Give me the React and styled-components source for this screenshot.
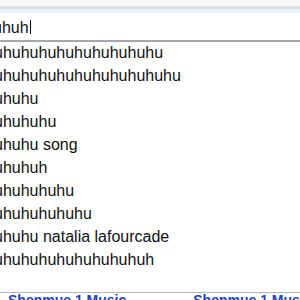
import React from 'react';
import styled, { createGlobalStyle } from 'styled-components';

const suggestions = [
  'uhuhuhuhuhuhuhuhuhu',
  'uhuhuhuhuhuhuhuhuhuhu',
  'uhuhu',
  'uhuhuhu',
  'uhuhu song',
  'uhuhuh',
  'uhuhuhuhu',
  'uhuhuhuhuhu',
  'uhuhu natalia lafourcade',
  'uhuhuhuhuhuhuhuhuh',
];

function App() {
  return (
    <Page>
      <GlobalStyle />
      <TopStrip />
      <SearchField>
        <Typed>uhuh</Typed>
        <Caret />
      </SearchField>
      <List>
        {suggestions.map((s, i) => (
          <Row key={i}>{s}</Row>
        ))}
      </List>
      <Footer>
        <Link>Shenmue 1 Music</Link>
        <Link>Shenmue 1 Music</Link>
      </Footer>
    </Page>
  );
}

const GlobalStyle = createGlobalStyle`
  html, body {
    margin: 0;
    background: #fff;
  }
`;

const Page = styled.div`
  width: 300px;
  height: 300px;
  overflow: hidden;
  display: flex;
  flex-direction: column;
  font-family: 'Liberation Sans', Arial, sans-serif;
  font-size: 16px;
  color: #111;
`;

const TopStrip = styled.div`
  height: 13px;
  flex: none;
  background: linear-gradient(
    to bottom,
    #f8f8f8 0 6px,
    #dce2e8 6px 9px,
    #eaf3f7 9px 13px
  );
`;

const SearchField = styled.div`
  height: 29px;
  flex: none;
  box-sizing: border-box;
  display: flex;
  align-items: flex-end;
  padding-bottom: 3px;
  margin-left: -7px;
  border-bottom: 2px solid #a6a6ae;
  white-space: nowrap;
`;

const Typed = styled.span`
  line-height: 18px;
`;

const Caret = styled.span`
  width: 1px;
  height: 14px;
  background: #000;
  margin: 0 0 3px 1px;
`;

const List = styled.ul`
  list-style: none;
  margin: 0;
  padding: 0;
  flex: none;
`;

const Row = styled.li`
  height: 23px;
  line-height: 22px;
  margin-left: -6px;
  white-space: nowrap;
`;

const Footer = styled.div`
  margin-top: auto;
  height: 7px;
  flex: none;
  border-top: 1px solid #b4b4b4;
  display: flex;
  gap: 67px;
  padding-left: 8px;
  overflow: hidden;
  white-space: nowrap;
`;

const Link = styled.span`
  color: #2141bd;
  font-weight: bold;
  font-size: 14px;
  line-height: 14px;
`;

export default App;
